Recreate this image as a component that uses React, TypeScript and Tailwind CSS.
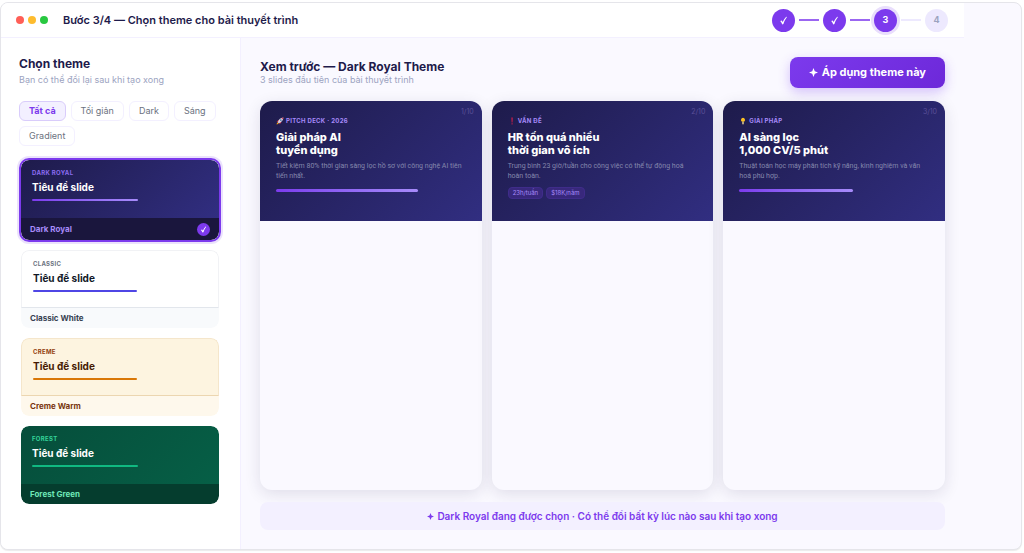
import { ReactNode, useState } from "react";
import clsx from "clsx";

const filters = ["Tất cả", "Tối giản", "Dark", "Sáng", "Gradient"];

const themes = [
  {
    id: "dark",
    tag: "DARK ROYAL",
    name: "Dark Royal",
    preview: "bg-linear-135 from-[#1e1b4b] to-[#312e81]",
    tagColor: "text-[#8b6cf0]",
    title: "text-white",
    bar: "bg-linear-to-r from-[#7c3aed] to-[#a78bfa]",
    foot: "bg-[#1a163d] text-[#a78bfa]",
  },
  {
    id: "classic",
    tag: "CLASSIC",
    name: "Classic White",
    preview: "bg-white border border-[#f1f2f5] border-b-[#e2e6ec]",
    tagColor: "text-[#6b7280]",
    title: "text-[#111827]",
    bar: "bg-[#4f46e5]",
    foot: "bg-[#f8fafc] text-[#374151]",
  },
  {
    id: "creme",
    tag: "CREME",
    name: "Creme Warm",
    preview: "bg-[#fdf4e0] border border-[#f5e6cb] border-b-[#ecd6b0]",
    tagColor: "text-[#92400e]",
    title: "text-[#451a03]",
    bar: "bg-[#d97706]",
    foot: "bg-[#fef8ec] text-[#78350f]",
  },
  {
    id: "forest",
    tag: "FOREST",
    name: "Forest Green",
    preview: "bg-linear-135 from-[#064e3b] to-[#065f46]",
    tagColor: "text-[#34d399]",
    title: "text-white",
    bar: "bg-[#10b981]",
    foot: "bg-[#053d2e] text-[#6ee7b7]",
  },
];

const Check = ({ className }: { className?: string }) => (
  <svg viewBox="0 0 12 12" className={className} fill="currentColor">
    <path d="M1.600 6.800 3.600 5.900 4.900 8.100C6 5.600 7.600 3.200 9.600 1L10.600 1.400C8.500 4.300 7 7.200 5.900 10.800L4.300 11.200C3.700 9.500 2.800 8.100 1.600 6.800Z" />
  </svg>
);

const Star = ({ className }: { className?: string }) => (
  <svg viewBox="0 0 12 12" className={className} fill="currentColor">
    <path d="M6 0 7.700 4.300 12 6 7.700 7.700 6 12 4.300 7.700 0 6 4.300 4.300Z" />
  </svg>
);

const Rocket = () => (
  <svg viewBox="0 0 14 14" className="size-2">
    <path d="M1 13 2 9 5 12Z" fill="#f59e0b" />
    <path d="M1 8.500 5 5 7 8ZM6 13 9.500 9 6 7Z" fill="#dc2f45" />
    <path d="M3 9.500C5 4 8 1.500 13 1 12.500 6 10 9.500 5 11Z" fill="#d6d9e6" />
    <path d="M9.500 1.700 13 1 12.300 4.500Z" fill="#dc2f45" />
    <circle cx="8.500" cy="5.500" r="1.400" fill="#4b6a9b" />
  </svg>
);

const Exclamation = () => (
  <svg viewBox="0 0 14 14" className="size-2">
    <path d="M6 1H8.200L7.700 9.500H6.500Z" fill="#e11d48" />
    <circle cx="7.100" cy="12" r="1.200" fill="#e11d48" />
  </svg>
);

const Bulb = () => (
  <svg viewBox="0 0 14 14" className="size-2">
    <path d="M7 1.500A3.800 3.800 0 0 1 8.800 8.500H5.200A3.800 3.800 0 0 1 7 1.500Z" fill="#fbbf24" />
    <path d="M5.500 8.500H8.500V11.500L7.700 13H6.300L5.500 11.500Z" fill="#cbb98a" />
  </svg>
);

type SlideProps = {
  page: string;
  icon: ReactNode;
  tag: string;
  title: [string, string];
  text: string;
  children: ReactNode;
};

const Slide = ({ page, icon, tag, title, text, children }: SlideProps) => (
  <article className="overflow-hidden rounded-xl bg-[#faf9ff] shadow-[0_4px_16px_rgba(30,27,75,0.12)]">
    <div className="relative h-[120px] bg-linear-135 from-[#1e1b4b] to-[#312e81] px-4 pt-4">
      <span className="absolute top-[7px] right-2 text-[7px] leading-2 text-[#5a5098]">{page}</span>
      <p className="flex items-center gap-[2px] text-[6px] leading-2 font-bold tracking-wider text-[#a78bfa]">
        {icon}
        {tag}
      </p>
      <h3 className="mt-[6px] text-[11px] leading-[13px] font-extrabold text-white">
        {title[0]}
        <br />
        {title[1]}
      </h3>
      <p className="mt-1 font-['Roboto',sans-serif] text-[7px] leading-[10px] text-[#8487ac]">{text}</p>
      {children}
    </div>
  </article>
);

const steps = [1, 2, 3, 4];
const current = 3;

const Header = () => (
  <header className="flex h-[35px] items-center border-b border-[#f3f0ff] bg-white pr-4 pl-[15px]">
    <div className="flex gap-1">
      <span className="size-2 rounded-full bg-[#ff5f57]" />
      <span className="size-2 rounded-full bg-[#febc2e]" />
      <span className="size-2 rounded-full bg-[#28c840]" />
    </div>
    <h1 className="ml-[15px] text-[11px] font-semibold text-[#1e1b4b]">
      Bước 3/4 — Chọn theme cho bài thuyết trình
    </h1>
    <ol className="ml-auto flex items-center gap-1">
      {steps.map((step) => (
        <li key={step} className="flex items-center gap-1">
          {step > 1 && (
            <span
              className={clsx("h-[2px] w-5", step <= current ? "bg-[#9b66f1]" : "bg-[#ede9fe]")}
            />
          )}
          <span
            className={clsx(
              "flex size-[23px] items-center justify-center rounded-full text-[9px] font-bold",
              step <= current ? "bg-[#7c3aed] text-white" : "bg-[#ede9fe] text-[#9ca3bf]",
              step === current && "ring-3 ring-[#e9defc]"
            )}
          >
            {step < current ? <Check className="size-[9px]" /> : step}
          </span>
        </li>
      ))}
    </ol>
  </header>
);

export default function App() {
  const [filter, setFilter] = useState("Tất cả");
  const [selected, setSelected] = useState("dark");

  return (
    <div className="flex min-h-screen bg-white pt-[2px] pr-[2px] pb-[3px] font-['Inter',sans-serif]">
      <div className="flex flex-1 flex-col overflow-hidden rounded-lg border border-[#e5e5ea] bg-[#faf9ff] pr-[57px] shadow-[0_1px_1px_rgba(0,0,0,0.08)]">
        <Header />
        <div className="flex flex-1">
          {/* Theme picker */}
          <aside className="w-60 shrink-0 border-r border-[#f3f0ff] bg-white pt-[18px] pr-[19px] pl-[18px]">
            <h2 className="text-[12px] leading-4 font-bold text-[#1e1b4b]">Chọn theme</h2>
            <p className="text-[9px] leading-4 text-[#9ca3bf]">Bạn có thể đổi lại sau khi tạo xong</p>
            <div className="mt-[13px] flex flex-wrap gap-[5px]">
              {filters.map((item) => (
                <button
                  key={item}
                  onClick={() => setFilter(item)}
                  className={clsx(
                    "h-5 rounded-md border px-[9px] text-[9px]",
                    item === filter
                      ? "border-[#d9ccfb] bg-[#f3f0ff] font-bold text-[#7c3aed]"
                      : "border-[#f3f0ff] bg-white text-[#6b7280]"
                  )}
                >
                  {item}
                </button>
              ))}
            </div>
            <div className="mt-3 flex flex-col gap-[6px]">
              {themes.map((theme) => (
                <button
                  key={theme.id}
                  onClick={() => setSelected(theme.id)}
                  className={clsx(
                    "overflow-hidden rounded-[10px] border-2 text-left",
                    theme.id === selected
                      ? "border-[#7c3aed] shadow-[0_0_0_2px_rgba(124,58,237,0.15)]"
                      : "border-transparent"
                  )}
                >
                  <div className={clsx("h-[58px] rounded-t-lg px-[11px] pt-[9px]", theme.preview)}>
                    <p className={clsx("text-[6px] leading-2 font-bold tracking-wider", theme.tagColor)}>
                      {theme.tag}
                    </p>
                    <p className={clsx("mt-1 text-[10px] leading-3 font-bold", theme.title)}>
                      Tiêu đề slide
                    </p>
                    <div className={clsx("mt-[6px] h-[2px] w-3/5 rounded-full", theme.bar)} />
                  </div>
                  <div
                    className={clsx(
                      "flex items-center justify-between rounded-b-lg px-[9px] text-[8px] font-bold",
                      theme.id === selected ? "h-[22px]" : "h-5",
                      theme.foot
                    )}
                  >
                    {theme.name}
                    {theme.id === selected && (
                      <span className="flex size-[13px] items-center justify-center rounded-full bg-[#7c3aed] text-white">
                        <Check className="size-[7px]" />
                      </span>
                    )}
                  </div>
                </button>
              ))}
            </div>
          </aside>

          {/* Preview */}
          <main className="flex flex-1 flex-col px-[19px] pt-[19px] pb-[19px]">
            <div className="flex items-center justify-between">
              <div>
                <h2 className="text-[12px] leading-[14px] font-bold text-[#1e1b4b]">
                  Xem trước — Dark Royal Theme
                </h2>
                <p className="text-[9px] leading-3 text-[#9ca3bf]">3 slides đầu tiên của bài thuyết trình</p>
              </div>
              <button className="flex h-[31px] items-center gap-1 rounded-lg bg-linear-135 from-[#7c3aed] to-[#6d28d9] px-[19px] text-[11px] font-bold text-white shadow-[0_4px_12px_rgba(124,58,237,0.3)]">
                <Star className="size-[9px]" />
                Áp dụng theme này
              </button>
            </div>
            <div className="mt-[13px] grid flex-1 grid-cols-3 gap-[10px]">
              <Slide
                page="1/10"
                icon={<Rocket />}
                tag="PITCH DECK · 2026"
                title={["Giải pháp AI", "tuyển dụng"]}
                text="Tiết kiệm 80% thời gian sàng lọc hồ sơ với công nghệ AI tiên tiến nhất."
              >
                <div className="mt-2 h-[3px] w-3/4 rounded-full bg-linear-to-r from-[#7c3aed] to-[#a78bfa]" />
              </Slide>
              <Slide
                page="2/10"
                icon={<Exclamation />}
                tag="VẤN ĐỀ"
                title={["HR tốn quá nhiều", "thời gian vô ích"]}
                text="Trung bình 23 giờ/tuần cho công việc có thể tự động hoá hoàn toàn."
              >
                <div className="mt-[6px] flex gap-[3px] text-[6px] leading-[10px] text-[#a78bfa]">
                  <span className="rounded-sm border border-[#3f2c8a] bg-[#38287c] px-1">23h/tuần</span>
                  <span className="rounded-sm border border-[#3f2c8a] bg-[#38287c] px-1">$18K/năm</span>
                </div>
              </Slide>
              <Slide
                page="3/10"
                icon={<Bulb />}
                tag="GIẢI PHÁP"
                title={["AI sàng lọc", "1,000 CV/5 phút"]}
                text="Thuật toán học máy phân tích kỹ năng, kinh nghiệm và văn hoá phù hợp."
              >
                <div className="mt-2 h-[3px] w-3/5 rounded-full bg-linear-to-r from-[#7c3aed] to-[#a78bfa]" />
              </Slide>
            </div>
            <p className="mt-3 flex h-7 items-center justify-center gap-[3px] rounded-lg bg-[#f3f0ff] text-[10px] font-semibold text-[#7c3aed]">
              <Star className="size-[7px]" />
              Dark Royal đang được chọn · Có thể đổi bất kỳ lúc nào sau khi tạo xong
            </p>
          </main>
        </div>
      </div>
    </div>
  );
}
